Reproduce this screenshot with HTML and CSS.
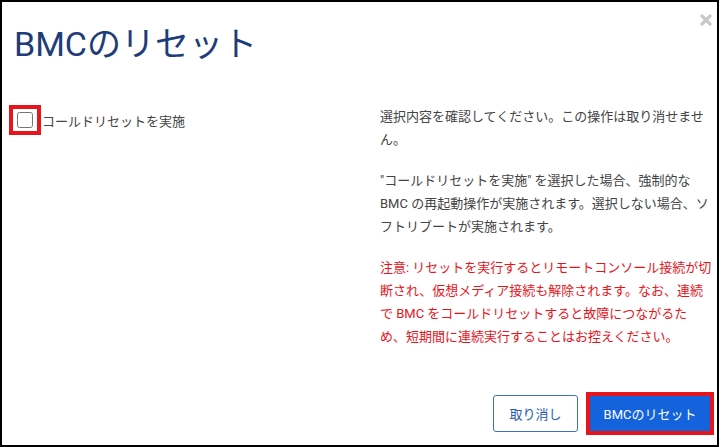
FILE: index.html
```html
<!DOCTYPE html>
<html lang="ja">
<head>
    <meta charset="UTF-8">
    <title>BMCのリセット</title>
    <link rel="stylesheet" href="styles.css">
</head>
<body>
    <div class="dialog">
        <button class="close" type="button" aria-label="閉じる">
            <svg width="12" height="12" viewBox="0 0 12 12">
                <path d="M2 2 L10 10 M10 2 L2 10" stroke="#c9c9c9" stroke-width="3.2" stroke-linecap="round"/>
            </svg>
        </button>
        <h1 class="title">BMCのリセット</h1>
        <div class="content">
            <div class="options">
                <label class="option">
                    <span class="mark"><input type="checkbox" id="coldReset"></span>
                    コールドリセットを実施
                </label>
            </div>
            <div class="notes">
                <p>選択内容を確認してください。この操作は取り消せません。</p>
                <p>"コールドリセットを実施" を選択した場合、強制的な<br>BMC の再起動操作が実施されます。選択しない場合、ソフトリブートが実施されます。</p>
                <p class="warn">注意: リセットを実行するとリモートコンソール接続が切断され、仮想メディア接続も解除されます。なお、連続で BMC をコールドリセットすると故障につながるため、短期間に連続実行することはお控えください。</p>
            </div>
        </div>
        <div class="actions">
            <button type="button" class="btn btn-cancel">取り消し</button>
            <button type="button" class="btn btn-primary">BMCのリセット</button>
        </div>
    </div>
</body>
</html>
```

FILE: styles.css
```css
body {
    margin: 0;
    font-family: Roboto, "Noto Sans CJK JP", sans-serif;
    background: #fff;
    color: #444;
}
.dialog {
    box-sizing: border-box;
    width: 719px;
    height: 447px;
    border: 2px solid #000;
    position: relative;
    display: flex;
    flex-direction: column;
}
.close {
    position: absolute;
    top: 12px;
    right: 5px;
    padding: 0;
    border: none;
    background: none;
    line-height: 0;
}
.title {
    margin: 0;
    padding: 22px 0 0 12px;
    font-size: 34px;
    font-weight: 400;
    line-height: 40px;
    color: #1e3d78;
}
.content {
    display: flex;
    margin-top: 41px;
}
.options {
    width: 371px;
    padding-left: 7px;
}
.option {
    display: flex;
    align-items: center;
    font-size: 13px;
    color: #444;
}
.mark {
    display: flex;
    padding: 3px 4px;
    border: 4px solid #e8141c;
    margin-right: 1px;
}
.mark input {
    margin: 0;
    width: 16px;
    height: 16px;
}
.notes {
    width: 332px;
    font-size: 13px;
    line-height: 23px;
}
.notes p {
    margin: 0 0 18px;
}
.notes .warn {
    color: #e8141c;
}
.actions {
    margin-top: auto;
    display: flex;
    align-items: center;
    justify-content: flex-end;
    gap: 12px;
    padding: 0 7px 13px 0;
}
.btn {
    font-family: Roboto, "Noto Sans CJK JP", sans-serif;
    font-size: 13px;
    border-radius: 3px;
    cursor: pointer;
}
.btn-cancel {
    width: 85px;
    height: 37px;
    background: #fff;
    color: #2a5db0;
    border: 1px solid #3f6fc0;
}
.btn-primary {
    width: 120px;
    height: 35px;
    background: #1462dc;
    color: #fff;
    border: none;
    border-radius: 0;
    outline: 4px solid #e8141c;
}
```
